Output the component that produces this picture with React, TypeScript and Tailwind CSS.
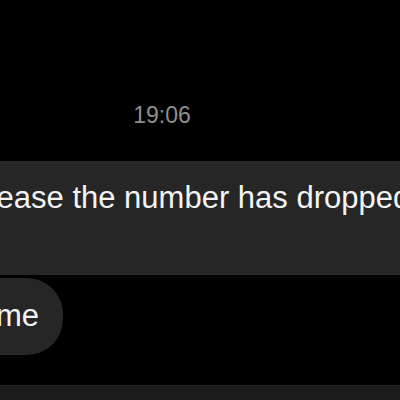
export default function App() {
  return (
    <div className="flex h-[400px] w-[400px] flex-col overflow-hidden bg-black font-['Liberation_Sans',Arial,sans-serif]">
      <div className="mt-[104px] h-[22px] w-[324px] text-center text-[23px] leading-[22px] text-[#8e8e8e]">
        19:06
      </div>

      <div className="mt-[35px] h-[114px] w-[400px] bg-[#262626] pt-[21px]">
        <p className="-ml-[31px] whitespace-nowrap text-[31px] leading-[31px] text-[#f4f4f4]">
          Please the number has dropped
        </p>
      </div>

      <div className="-ml-[40px] mt-[3px] h-[77px] w-[103px] rounded-[36px] bg-[#262626] pr-[24px] pt-[22px] text-right text-[31px] leading-[31px] text-[#f4f4f4]">
        me
      </div>

      <div className="mt-[30px] flex-1 border-t border-[#242424] bg-[#1b1b1b]" />
    </div>
  )
}
